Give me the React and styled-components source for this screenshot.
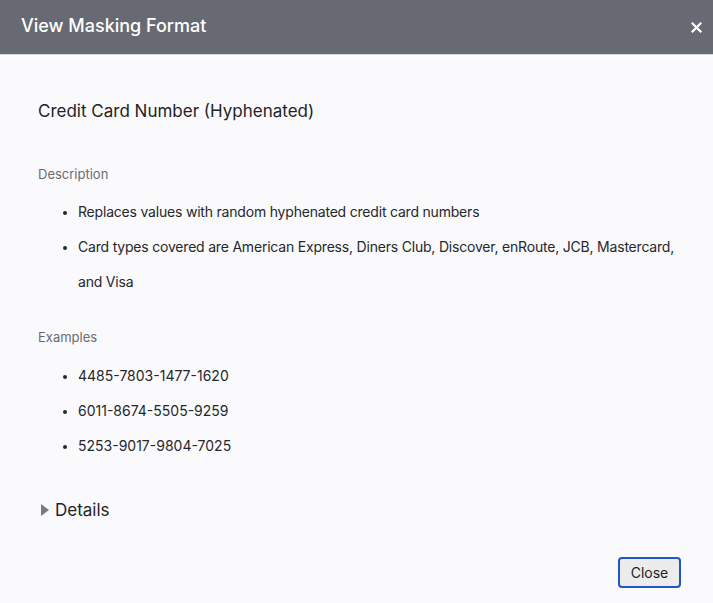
import React from "react";
import styled, { createGlobalStyle } from "styled-components";

const GlobalStyle = createGlobalStyle`
  html, body {
    margin: 0;
    padding: 0;
    background: #fafafc;
  }
  body {
    font-family: "Inter", "Liberation Sans", sans-serif;
    -webkit-font-smoothing: antialiased;
  }
`;

const descriptionItems = [
  "Replaces values with random hyphenated credit card numbers",
  "Card types covered are American Express, Diners Club, Discover, enRoute, JCB, Mastercard, and Visa",
];

const exampleItems = [
  "4485-7803-1477-1620",
  "6011-8674-5505-9259",
  "5253-9017-9804-7025",
];

function App() {
  return (
    <>
      <GlobalStyle />
      <Dialog>
        <Header>
          <Title>View Masking Format</Title>
          <CloseX aria-label="close">
            <svg width="11" height="11" viewBox="0 0 11 11">
              <path d="M1.5 1.5 L9.5 9.5 M9.5 1.5 L1.5 9.5" stroke="#fff" strokeWidth="2.2" strokeLinecap="square" />
            </svg>
          </CloseX>
        </Header>
        <Body>
          <FormatName>Credit Card Number (Hyphenated)</FormatName>
          <SectionLabel>Description</SectionLabel>
          <BulletList>
            {descriptionItems.map((item) => (
              <li key={item}>{item}</li>
            ))}
          </BulletList>
          <SectionLabel $spaced>Examples</SectionLabel>
          <BulletList $examples>
            {exampleItems.map((item) => (
              <li key={item}>{item}</li>
            ))}
          </BulletList>
          <Details>
            <Caret />
            Details
          </Details>
        </Body>
        <Footer>
          <CloseButton>Close</CloseButton>
        </Footer>
      </Dialog>
    </>
  );
}

export default App;

const Dialog = styled.div`
  width: 713px;
  min-height: 603px;
  background: #fafafc;
  display: flex;
  flex-direction: column;
`;

const Header = styled.div`
  height: 54px;
  background: #676a73;
  border-bottom: 1px solid #d6d7db;
  display: flex;
  align-items: center;
  justify-content: space-between;
  padding: 0 11px 0 21px;
`;

const Title = styled.h1`
  margin: 0;
  margin-top: -3px;
  color: #ffffff;
  font-size: 18px;
  font-weight: 500;
  letter-spacing: 0;
`;

const CloseX = styled.span`
  display: flex;
  align-items: center;
  margin-top: 1px;
`;

const Body = styled.div`
  padding: 44px 36px 0 38px;
  display: flex;
  flex-direction: column;
`;

const FormatName = styled.h2`
  margin: 0;
  font-size: 17px;
  line-height: 24px;
  font-weight: 400;
  color: #222327;
`;

const SectionLabel = styled.div`
  margin-top: ${(p) => (p.$spaced ? "28px" : "41px")};
  font-size: 13px;
  line-height: 20px;
  color: #6a6b70;
`;

const BulletList = styled.ul`
  margin: ${(p) => (p.$examples ? "11px" : "10px")} 0 0 0;
  padding-left: 40px;
  font-size: 14px;
  line-height: 35px;
  letter-spacing: ${(p) => (p.$examples ? "0" : "-0.2px")};
  color: #26272b;

  li::marker {
    font-size: 12px;
  }
`;

const Details = styled.div`
  margin-top: 35px;
  display: flex;
  align-items: center;
  font-size: 17px;
  line-height: 24px;
  color: #222327;
`;

const Caret = styled.span`
  width: 0;
  height: 0;
  border-top: 6px solid transparent;
  border-bottom: 6px solid transparent;
  border-left: 8px solid #7a7b80;
  margin: 0 6px 0 3px;
`;

const Footer = styled.div`
  display: flex;
  justify-content: flex-end;
  padding: 35px 32px 0 0;
`;

const CloseButton = styled.button`
  width: 63px;
  height: 31px;
  border: 2px solid #1f56c8;
  border-radius: 4px;
  background: #ececec;
  font-family: "Inter", "Liberation Sans", sans-serif;
  font-size: 14px;
  color: #1d1d1f;
  padding: 0;
`;
